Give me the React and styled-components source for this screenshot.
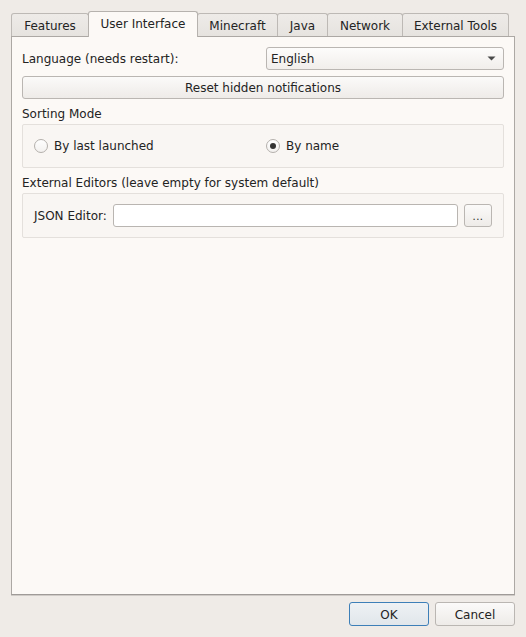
import React, { useState } from "react";
import styled, { createGlobalStyle, css } from "styled-components";

const Global = createGlobalStyle`
  html, body { margin: 0; padding: 0; }
  body {
    background: #efebe7;
    font-family: "DejaVu Sans", "Liberation Sans", sans-serif;
    font-size: 12px;
    color: #232323;
  }
  * { box-sizing: border-box; }
`;

const Window = styled.div`
  width: 526px;
  height: 637px;
  padding: 11px;
  display: flex;
  flex-direction: column;
`;

const TabBar = styled.div`
  display: flex;
  align-items: flex-end;
  height: 26px;
  margin-bottom: -1px;
  position: relative;
  z-index: 1;
`;

const Tab = styled.div`
  display: flex;
  align-items: center;
  justify-content: center;
  width: ${(p) => p.$w}px;
  border: 1px solid #bdb9b5;
  border-bottom: none;
  border-radius: 3px 3px 0 0;
  margin-right: -1px;
  white-space: nowrap;
  line-height: 15px;
  ${(p) =>
    p.$active
      ? css`
          height: 26px;
          background: #fcf9f6;
          border-color: #b6b2ae;
          position: relative;
          z-index: 2;
        `
      : css`
          height: 23px;
          margin-bottom: 1px;
          background: linear-gradient(#eeebe8, #e6e3df);
          padding-top: 2px;
        `}
`;

const Panel = styled.div`
  flex: 1;
  background: #fcf9f6;
  border: 1px solid #aca8a4;
  border-bottom-color: #9f9b98;
  box-shadow: 0 1px 0 #cfcbc7;
  padding: 10px;
  display: flex;
  flex-direction: column;
  gap: 6px;
`;

const TwoCol = styled.div`
  display: grid;
  grid-template-columns: 1fr 1fr;
  column-gap: 6px;
  align-items: center;
  min-height: ${(p) => p.$h || 23}px;
`;

const Label = styled.span`
  line-height: 15px;
  padding-top: ${(p) => (p.$flat ? 0 : 2)}px;
  white-space: nowrap;
`;

const Combo = styled.div`
  height: 23px;
  display: flex;
  align-items: center;
  justify-content: space-between;
  padding: 0 7px 0 4px;
  border: 1px solid #bab6b2;
  border-radius: 3px;
  background: linear-gradient(#fdfcfb, #f1eeeb);
`;

const Arrow = styled.svg`
  width: 9px;
  height: 5px;
`;

const Button = styled.button`
  font: inherit;
  color: inherit;
  height: ${(p) => p.$h || 23}px;
  width: ${(p) => (p.$w ? p.$w + "px" : "auto")};
  padding: 2px 0 0;
  border: 1px solid ${(p) => (p.$default ? "#3d7fb8" : "#bab6b2")};
  border-radius: 3px;
  background: ${(p) =>
    p.$default
      ? "linear-gradient(#eef1f4, #e1e6eb)"
      : "linear-gradient(#fbfaf9, #eeebe8)"};
  line-height: 15px;
  cursor: default;
`;

const Section = styled.div`
  display: flex;
  flex-direction: column;
  gap: 2px;
`;

const GroupBox = styled.div`
  border: 1px solid #e4e0dc;
  border-radius: 2px;
  padding: 10px 11px;
  background: #f9f6f3;
`;

const RadioRow = styled.label`
  display: flex;
  align-items: center;
  gap: 6px;
  height: 22px;
`;

const RadioMark = styled.span`
  width: 14px;
  height: 14px;
  border-radius: 50%;
  border: 1px solid #b4b0ac;
  background: linear-gradient(#fefefe, #f3f1ef);
  display: flex;
  align-items: center;
  justify-content: center;
  &::after {
    content: "";
    width: 6px;
    height: 6px;
    border-radius: 50%;
    background: #333;
    display: ${(p) => (p.$on ? "block" : "none")};
  }
`;

const EditorRow = styled.div`
  display: flex;
  align-items: center;
  gap: 6px;
`;

const Input = styled.input`
  flex: 1;
  height: 23px;
  border: 1px solid #b9b5b1;
  border-radius: 3px;
  background: #fff;
  font: inherit;
  padding: 0 4px;
  outline: none;
`;

const Footer = styled.div`
  display: flex;
  justify-content: flex-end;
  gap: 6px;
  margin-top: 7px;
`;

const Dots = styled.span`
  font-size: 10px;
  letter-spacing: 0.5px;
`;

const TABS = [
  ["Features", 78],
  ["User Interface", 110],
  ["Minecraft", 81],
  ["Java", 51],
  ["Network", 76],
  ["External Tools", 107],
];

export default function App() {
  const [mode, setMode] = useState("name");
  return (
    <>
      <Global />
      <Window>
        <TabBar>
          {TABS.map(([t, w]) => (
            <Tab key={t} $w={w} $active={t === "User Interface"}>
              {t}
            </Tab>
          ))}
        </TabBar>
        <Panel>
          <TwoCol>
            <Label>Language (needs restart):</Label>
            <Combo>
              <Label>English</Label>
              <Arrow viewBox="0 0 9 5">
                <path d="M0.5 0.5 L8.5 0.5 L4.5 4.5 Z" fill="#4a4a4a" />
              </Arrow>
            </Combo>
          </TwoCol>
          <Button>Reset hidden notifications</Button>
          <Section>
            <Label>Sorting Mode</Label>
            <GroupBox>
              <TwoCol $h={22}>
                <RadioRow onClick={() => setMode("launched")}>
                  <RadioMark $on={mode === "launched"} />
                  <Label $flat>By last launched</Label>
                </RadioRow>
                <RadioRow onClick={() => setMode("name")}>
                  <RadioMark $on={mode === "name"} />
                  <Label $flat>By name</Label>
                </RadioRow>
              </TwoCol>
            </GroupBox>
          </Section>
          <Section>
            <Label>External Editors (leave empty for system default)</Label>
            <GroupBox>
              <EditorRow>
                <Label>JSON Editor:</Label>
                <Input />
                <Button $w={28}>
                  <Dots>...</Dots>
                </Button>
              </EditorRow>
            </GroupBox>
          </Section>
        </Panel>
        <Footer>
          <Button $w={80} $h={24} $default>
            OK
          </Button>
          <Button $w={80} $h={24}>
            Cancel
          </Button>
        </Footer>
      </Window>
    </>
  );
}
